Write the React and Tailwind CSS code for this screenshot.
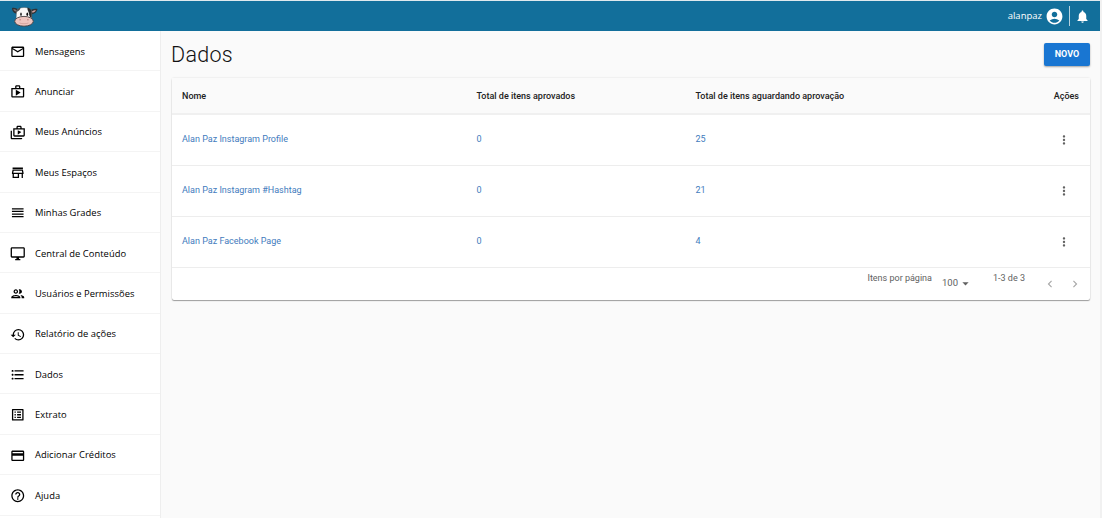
import {
  MdAccountCircle,
  MdArrowDropDown,
  MdChevronLeft,
  MdChevronRight,
  MdFormatListBulleted,
  MdHelpOutline,
  MdHistory,
  MdMailOutline,
  MdMoreVert,
  MdNotifications,
  MdOutlineDesktopWindows,
  MdOutlineGroup,
  MdOutlineListAlt,
  MdOutlinePayment,
  MdOutlineShop,
  MdOutlineShopTwo,
  MdOutlineStore,
  MdReorder
} from 'react-icons/md';

const menu = [
  { label: 'Mensagens', icon: MdMailOutline },
  { label: 'Anunciar', icon: MdOutlineShop },
  { label: 'Meus Anúncios', icon: MdOutlineShopTwo },
  { label: 'Meus Espaços', icon: MdOutlineStore },
  { label: 'Minhas Grades', icon: MdReorder },
  { label: 'Central de Conteúdo', icon: MdOutlineDesktopWindows },
  { label: 'Usuários e Permissões', icon: MdOutlineGroup },
  { label: 'Relatório de ações', icon: MdHistory },
  { label: 'Dados', icon: MdFormatListBulleted },
  { label: 'Extrato', icon: MdOutlineListAlt },
  { label: 'Adicionar Créditos', icon: MdOutlinePayment },
  { label: 'Ajuda', icon: MdHelpOutline }
];

const rows = [
  { name: 'Alan Paz Instagram Profile', approved: 0, pending: 25 },
  { name: 'Alan Paz Instagram #Hashtag', approved: 0, pending: 21 },
  { name: 'Alan Paz Facebook Page', approved: 0, pending: 4 }
];

function Logo() {
  return (
    <svg className="h-[22px] w-[28px]" viewBox="0 0 28 22">
      <path d="M7 8.500C4 8.500 2 6.500 2 3c3-.5 5.500.5 7 2.500z" fill="#303234" />
      <path d="M6 6.500C4.500 6.200 3.500 5.200 3.300 4.200c1.500 0 2.700.5 3.500 1.400z" fill="#806f70" />
      <path d="M21 9c3.500 0 6-2 6.500-5-3-.7-5.500 0-7.500 2z" fill="#303234" />
      <path d="M22 7.500c1.700 0 3.300-.9 3.900-2.300-1.600 0-3 .4-4 1.300z" fill="#d3a3a0" />
      <path d="M6 14.500C6.500 11 6 8 7 5.500 8.500 1.500 19.500 1.500 21.500 5.500c1 3 .2 6 .5 9.500z" fill="#f8f8f7" stroke="#4a4c4e" strokeWidth=".4" />
      <path d="M17.500 2.700c2 .3 3.400 1.200 4 2.800.6 2.500.2 5 .2 7.500-1.700-.5-2.500-2-2.700-4.500-.3-2-2-3.500-1.500-5.800z" fill="#292b2c" />
      <path d="M7 5.500C7.500 4 8.800 3.100 10.300 2.800c.2 1.500-1.200 3.200-3.500 4z" fill="#4b4f51" />
      <ellipse cx="14" cy="16.300" rx="9.300" ry="4.900" fill="#edc5bf" stroke="#453f40" strokeWidth=".9" />
      <ellipse cx="11" cy="9.200" rx=".8" ry="1.800" fill="#222222" />
      <ellipse cx="17.300" cy="9.200" rx=".9" ry="1.800" fill="#0c0c0c" />
      <path d="M9.500 14.800h1.200M17.300 14.800h1.200" stroke="#a5675f" />
      <path d="M9.500 18c3 1 6 1 9 0" stroke="#c59089" strokeWidth=".6" fill="none" />
    </svg>
  );
}

function Header() {
  return (
    <header className="flex h-[31px] shrink-0 items-center justify-between border-t border-[#dfe9ee] bg-[#126f9b] pl-[10px] pr-[10px] text-white">
      <Logo />
      <div className="flex items-center">
        <span className="font-['Open_Sans',sans-serif] text-[9.500px]">alanpaz</span>
        <MdAccountCircle className="ml-[3px] size-[19px]" />
        <span className="ml-[5px] h-[20px] w-px bg-[#b5d2df]" />
        <MdNotifications className="ml-[5px] size-[15px]" />
      </div>
    </header>
  );
}

function Sidebar() {
  return (
    <nav className="w-[161px] shrink-0 overflow-hidden border-r border-[#eeeeee] bg-white font-['Open_Sans',sans-serif] text-[9.400px] text-black">
      {menu.map(({ label, icon: Icon }) => (
        <a key={label} className="flex h-[40.380px] items-center gap-[10px] border-b border-[#f4f4f4] pl-[9.500px] pt-[2px]">
          <Icon className="size-[15.500px] shrink-0" />
          <span className="whitespace-nowrap tracking-[0.03px]">{label}</span>
        </a>
      ))}
    </nav>
  );
}

function DataTable() {
  return (
    <section className="mt-[10px] h-[222px] rounded-xs bg-white text-[9px] shadow-[0_1px_1px_rgba(0,0,0,0.35),0_0_2px_rgba(0,0,0,0.14)]">
      <table className="w-full table-fixed border-collapse text-left">
        <colgroup>
          <col className="w-[294.500px]" />
          <col className="w-[219px]" />
          <col />
          <col className="w-[96px]" />
        </colgroup>
        <thead>
          <tr className="h-[36px] border-b-2 border-[#f0f0f0] bg-[#fafafa] text-[#212121]">
            <th className="px-[10px] pt-[2px] pb-0 font-medium">Nome</th>
            <th className="px-[10px] pt-[2px] pb-0 font-medium">Total de itens aprovados</th>
            <th className="px-[10px] pt-[2px] pb-0 font-medium">Total de itens aguardando aprovação</th>
            <th className="pl-[10px] pr-[11px] pt-[2px] pb-0 text-right font-medium">Ações</th>
          </tr>
        </thead>
        <tbody>
          {rows.map((row) => (
            <tr key={row.name} className="h-[51px] border-b border-[#ededed] text-[#427bbd]">
              <td className="px-[10px]">{row.name}</td>
              <td className="px-[10px]">{row.approved}</td>
              <td className="px-[10px]">{row.pending}</td>
              <td className="pr-[19px] text-[#616161]">
                <MdMoreVert className="ml-auto size-[14px]" />
              </td>
            </tr>
          ))}
        </tbody>
      </table>
      <div className="flex justify-end pr-[8px] text-[#616161]">
        <span className="pt-[4px]">Itens por página</span>
        <button className="ml-[10px] flex items-center pt-[8px] text-[9.500px]">
          100
          <MdArrowDropDown className="size-[15px]" />
        </button>
        <span className="ml-[20px] pt-[4px]">1-3 de 3</span>
        <div className="ml-[18px] flex gap-[11px] pt-[9px] text-[#a8a8a8]">
          <MdChevronLeft className="size-[14px]" />
          <MdChevronRight className="size-[14px]" />
        </div>
      </div>
    </section>
  );
}

export default function App() {
  return (
    <div className="flex h-[518px] overflow-hidden bg-[#f1f1f1] pr-[2px]">
      <div className="flex min-w-0 flex-1 flex-col bg-[#fafafa]">
        <Header />
        <div className="flex min-h-0 flex-1">
          <Sidebar />
          <main className="min-w-0 flex-1 pl-[11px] pr-[10px] pt-[12px] font-[Roboto,sans-serif]">
            <div className="flex h-[25px] items-center justify-between">
              <h1 className="-ml-px pb-[2px] text-[21.500px] font-light leading-none tracking-[0.3px] text-[#111111]">Dados</h1>
              <button className="mb-[2px] h-[23px] w-[46px] rounded-xs bg-[#1976d2] text-[9px] font-bold text-white shadow-[0_1px_2px_rgba(0,0,0,0.35)]">
                NOVO
              </button>
            </div>
            <DataTable />
          </main>
        </div>
      </div>
    </div>
  );
}
